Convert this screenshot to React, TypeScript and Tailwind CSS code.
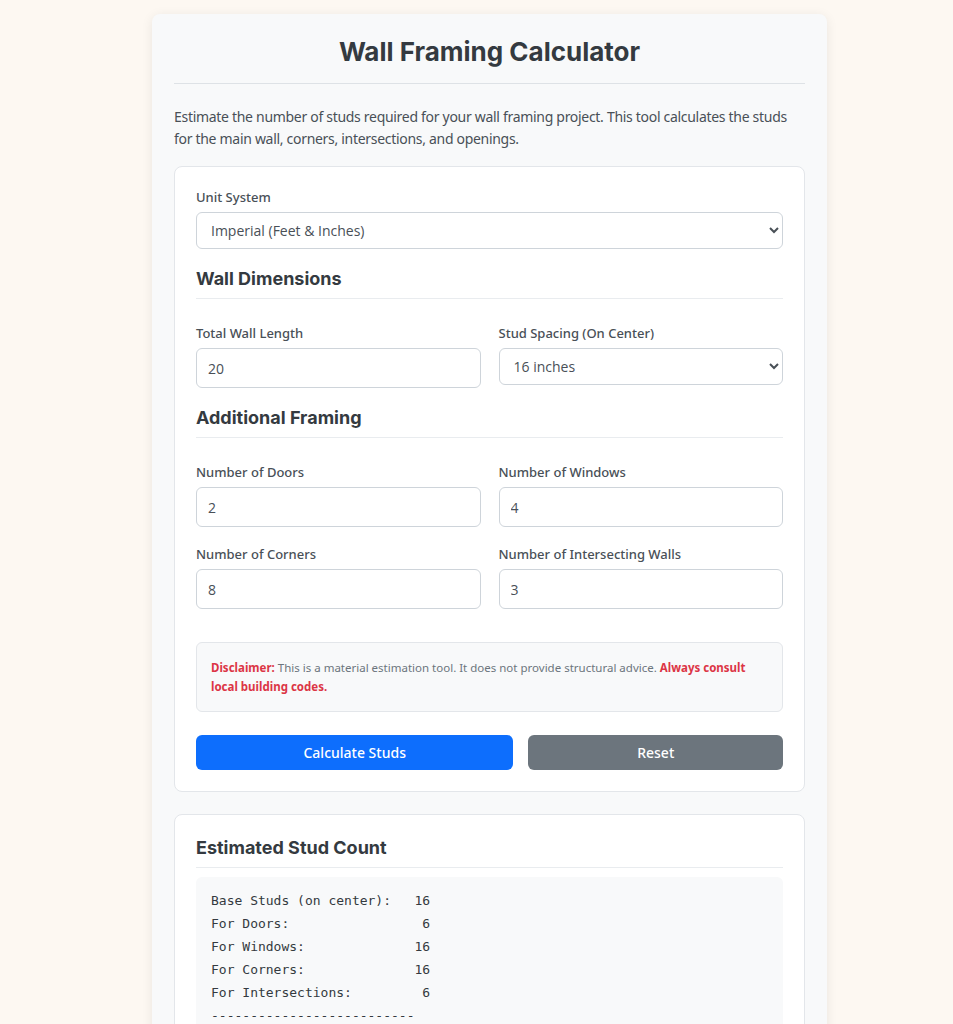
import { useState } from "react";

const heading = "font-['Inter',sans-serif] font-bold text-[#343a40]";
const body = "font-['Noto_Sans','Open_Sans',sans-serif]";

function Field({ label, children }: { label: string; children: React.ReactNode }) {
  return (
    <div>
      <label className={`${body} block text-[13px] leading-[18px] font-medium text-[#495057] mb-[6px]`}>{label}</label>
      {children}
    </div>
  );
}

const inputCls =
  "block w-full h-[40px] rounded-md border border-[#ced4da] bg-white px-[11px] text-[14px] text-[#495057] font-['Open_Sans',sans-serif] outline-none";
const selectCls =
  "block w-full h-[37px] rounded-md border border-[#ced4da] bg-white pl-[10px] pr-2 text-[14px] text-[#495057] font-['Open_Sans',sans-serif] outline-none";

export default function App() {
  const [unit, setUnit] = useState("imperial");
  const [length, setLength] = useState("20");
  const [spacing, setSpacing] = useState("16");
  const [doors, setDoors] = useState("2");
  const [windows, setWindows] = useState("4");
  const [corners, setCorners] = useState("8");
  const [inter, setInter] = useState("3");

  const lines = [
    "Base Studs (on center):   16",
    "For Doors:                 6",
    "For Windows:              16",
    "For Corners:              16",
    "For Intersections:         6",
    "--------------------------",
    "Total Studs:              60",
  ];

  return (
    <div className="min-h-screen bg-[#fdf8f2] pt-[14px] pb-10">
      <div className="ml-[152px] w-[675px] rounded-lg bg-[#f8f9fa] p-[22px] shadow-[0_2px_12px_rgba(0,0,0,0.08)]">
        <h1 className={`${heading} text-center text-[26px] leading-[31px] pb-4 border-b border-[#dee2e6]`}>
          Wall Framing Calculator
        </h1>
        <p className={`${body} mt-[22px] text-[14px] tracking-[-0.3px] leading-[22px] text-[#495057]`}>
          Estimate the number of studs required for your wall framing project. This tool calculates the studs
          for the main wall, corners, intersections, and openings.
        </p>

        <section className="mt-4 rounded-lg border border-[#e3e6ea] bg-white px-[21px] pt-[21px] pb-[21px]">
          <Field label="Unit System">
            <select className={selectCls} value={unit} onChange={(e) => setUnit(e.target.value)}>
              <option value="imperial">Imperial (Feet &amp; Inches)</option>
              <option value="metric">Metric (Meters)</option>
            </select>
          </Field>

          <h2 className={`${heading} mt-[18px] text-[18px] leading-[24px] pb-[7px] border-b border-[#e9ecef]`}>
            Wall Dimensions
          </h2>
          <div className="mt-[25px] grid grid-cols-2 gap-x-[18px]">
            <Field label="Total Wall Length">
              <input className={inputCls} value={length} onChange={(e) => setLength(e.target.value)} />
            </Field>
            <Field label="Stud Spacing (On Center)">
              <select className={selectCls} value={spacing} onChange={(e) => setSpacing(e.target.value)}>
                <option value="12">12 inches</option>
                <option value="16">16 inches</option>
                <option value="24">24 inches</option>
              </select>
            </Field>
          </div>

          <h2 className={`${heading} mt-[18px] text-[18px] leading-[24px] pb-[7px] border-b border-[#e9ecef]`}>
            Additional Framing
          </h2>
          <div className="mt-[25px] grid grid-cols-2 gap-x-[18px] gap-y-[18px]">
            <Field label="Number of Doors">
              <input className={inputCls} value={doors} onChange={(e) => setDoors(e.target.value)} />
            </Field>
            <Field label="Number of Windows">
              <input className={inputCls} value={windows} onChange={(e) => setWindows(e.target.value)} />
            </Field>
            <Field label="Number of Corners">
              <input className={inputCls} value={corners} onChange={(e) => setCorners(e.target.value)} />
            </Field>
            <Field label="Number of Intersecting Walls">
              <input className={inputCls} value={inter} onChange={(e) => setInter(e.target.value)} />
            </Field>
          </div>

          <p className={`${body} mt-[33px] rounded-md border border-[#e3e6ea] bg-[#f8f9fa] px-[14px] py-[15px] text-[11.5px] leading-[19px] text-[#6c757d]`}>
            <b className="text-[#dc3545]">Disclaimer:</b> This is a material estimation tool. It does not provide
            structural advice. <b className="text-[#dc3545]">Always consult local building codes.</b>
          </p>

          <div className="mt-[23px] grid grid-cols-[318fr_255fr] gap-[15px]">
            <button
              type="button"
              className={`${body} h-[35px] rounded-md bg-[#0d6efd] text-[14px] font-medium text-white`}
            >
              Calculate Studs
            </button>
            <button
              type="button"
              className={`${body} h-[35px] rounded-md bg-[#6c757d] text-[14px] font-medium text-white`}
            >
              Reset
            </button>
          </div>
        </section>

        <section className="mt-[22px] rounded-lg border border-[#e3e6ea] bg-white px-[21px] pt-[21px] pb-[21px]">
          <h2 className={`${heading} text-[18px] leading-[24px] pb-[7px] border-b border-[#e9ecef]`}>
            Estimated Stud Count
          </h2>
          <pre className="mt-[9px] rounded-md bg-[#f8f9fa] px-[15px] pt-[12px] pb-[13px] font-['DejaVu_Sans_Mono',monospace] text-[13px] leading-[23px] text-[#343a40]">
            {lines.join("\n")}
          </pre>
        </section>
      </div>
    </div>
  );
}
